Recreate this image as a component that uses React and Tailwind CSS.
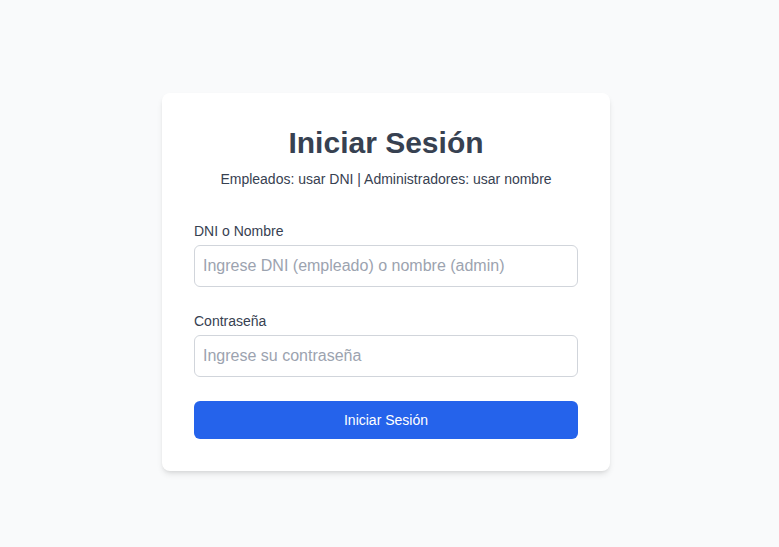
export default function App() {
  return (
    <div
      className="min-h-screen bg-[#f9fafb] flex justify-center pt-[93px] pr-[7px]"
      style={{ fontFamily: '"Liberation Sans", Arial, sans-serif' }}
    >
      <div className="w-[448px] h-fit bg-white rounded-lg shadow-[0_4px_6px_-1px_rgba(0,0,0,0.1),0_2px_4px_-2px_rgba(0,0,0,0.1)] p-8">
        <div className="text-center mb-8">
          <h1 className="text-3xl font-bold text-[#374151]">Iniciar Sesión</h1>
          <p className="mt-2 text-sm text-[#374151]">
            Empleados: usar DNI | Administradores: usar nombre
          </p>
        </div>
        <form onSubmit={(e) => e.preventDefault()}>
          <div className="mb-6">
            <label className="block text-sm text-[#374151] mb-1">DNI o Nombre</label>
            <input
              type="text"
              placeholder="Ingrese DNI (empleado) o nombre (admin)"
              className="w-full px-2 py-2 text-base border border-[#d1d5db] rounded-md text-[#374151] placeholder:text-[#9ca3af] outline-none"
            />
          </div>
          <div className="mb-6">
            <label className="block text-sm text-[#374151] mb-1">Contraseña</label>
            <input
              type="password"
              placeholder="Ingrese su contraseña"
              className="w-full px-2 py-2 text-base border border-[#d1d5db] rounded-md text-[#374151] placeholder:text-[#9ca3af] outline-none"
            />
          </div>
          <button
            type="submit"
            className="w-full bg-[#2563eb] text-white text-sm py-[9px] rounded-md"
          >
            Iniciar Sesión
          </button>
        </form>
      </div>
    </div>
  );
}
